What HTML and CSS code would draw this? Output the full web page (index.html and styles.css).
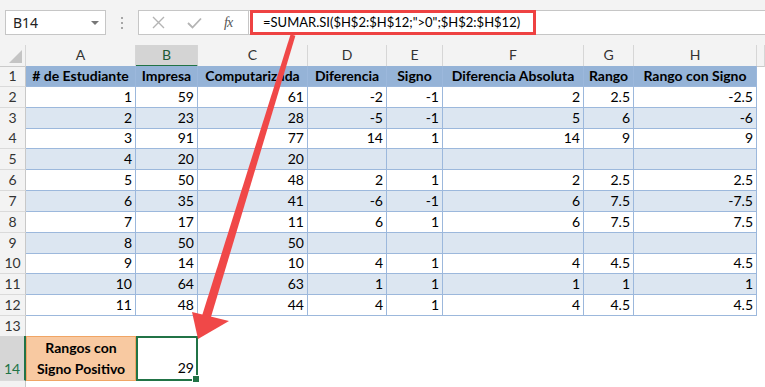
FILE: index.html
```html
<!DOCTYPE html>
<html lang="es">
<head>
  <meta charset="UTF-8">
  <title>SUMAR.SI</title>
  <link rel="stylesheet" href="styles.css">
</head>
<body>
<div class="page">

  <div class="formula-bar">
    <div class="name-box"><span>B14</span><i class="caret"></i></div>
    <div class="grip"><i></i><i></i><i></i></div>
    <div class="fx-box">
      <svg width="13" height="13" viewBox="0 0 13 13"><path d="M1 1 L12 12 M12 1 L1 12" stroke="#b4b4b4" stroke-width="1.4" fill="none"/></svg>
      <svg width="15" height="12" viewBox="0 0 15 12"><path d="M1 6 L5.5 10.5 L14 1.5" stroke="#b4b4b4" stroke-width="1.8" fill="none"/></svg>
      <span class="fx">fx</span>
    </div>
    <div class="formula">
      <div class="callout">=SUMAR.SI($H$2:$H$12;"&gt;0";$H$2:$H$12)</div>
    </div>
  </div>

  <div class="sheet">
    <div class="row col-head">
      <div class="corner"><i></i></div><div>A</div><div class="sel">B</div><div>C</div><div>D</div><div>E</div><div>F</div><div>G</div><div>H</div><div></div>
    </div>

    <div class="row r thead">
      <div class="rh">1</div><div class="c">#&nbsp;de Estudiante</div><div class="c">Impresa</div><div class="c">Computarizada</div><div class="c">Diferencia</div><div class="c">Signo</div><div class="c">Diferencia Absoluta</div><div class="c">Rango</div><div class="c">Rango con Signo</div><div></div>
    </div>
    <div class="row r">
      <div class="rh">2</div><div class="c">1</div><div class="c">59</div><div class="c">61</div><div class="c">-2</div><div class="c">-1</div><div class="c">2</div><div class="c">2.5</div><div class="c">-2.5</div><div></div>
    </div>
    <div class="row r stripe">
      <div class="rh">3</div><div class="c">2</div><div class="c">23</div><div class="c">28</div><div class="c">-5</div><div class="c">-1</div><div class="c">5</div><div class="c">6</div><div class="c">-6</div><div></div>
    </div>
    <div class="row r">
      <div class="rh">4</div><div class="c">3</div><div class="c">91</div><div class="c">77</div><div class="c">14</div><div class="c">1</div><div class="c">14</div><div class="c">9</div><div class="c">9</div><div></div>
    </div>
    <div class="row r stripe">
      <div class="rh">5</div><div class="c">4</div><div class="c">20</div><div class="c">20</div><div class="c"></div><div class="c"></div><div class="c"></div><div class="c"></div><div class="c"></div><div></div>
    </div>
    <div class="row r">
      <div class="rh">6</div><div class="c">5</div><div class="c">50</div><div class="c">48</div><div class="c">2</div><div class="c">1</div><div class="c">2</div><div class="c">2.5</div><div class="c">2.5</div><div></div>
    </div>
    <div class="row r stripe">
      <div class="rh">7</div><div class="c">6</div><div class="c">35</div><div class="c">41</div><div class="c">-6</div><div class="c">-1</div><div class="c">6</div><div class="c">7.5</div><div class="c">-7.5</div><div></div>
    </div>
    <div class="row r">
      <div class="rh">8</div><div class="c">7</div><div class="c">17</div><div class="c">11</div><div class="c">6</div><div class="c">1</div><div class="c">6</div><div class="c">7.5</div><div class="c">7.5</div><div></div>
    </div>
    <div class="row r stripe">
      <div class="rh">9</div><div class="c">8</div><div class="c">50</div><div class="c">50</div><div class="c"></div><div class="c"></div><div class="c"></div><div class="c"></div><div class="c"></div><div></div>
    </div>
    <div class="row r">
      <div class="rh">10</div><div class="c">9</div><div class="c">14</div><div class="c">10</div><div class="c">4</div><div class="c">1</div><div class="c">4</div><div class="c">4.5</div><div class="c">4.5</div><div></div>
    </div>
    <div class="row r stripe">
      <div class="rh">11</div><div class="c">10</div><div class="c">64</div><div class="c">63</div><div class="c">1</div><div class="c">1</div><div class="c">1</div><div class="c">1</div><div class="c">1</div><div></div>
    </div>
    <div class="row r">
      <div class="rh">12</div><div class="c">11</div><div class="c">48</div><div class="c">44</div><div class="c">4</div><div class="c">1</div><div class="c">4</div><div class="c">4.5</div><div class="c">4.5</div><div></div>
    </div>

    <div class="row r13">
      <div class="rh">13</div>
    </div>
    <div class="row r14">
      <div class="rh active-rh">14</div>
      <div class="label">Rangos con<br>Signo Positivo</div>
      <div class="active">29</div>
    </div>
    <div class="row r15">
      <div class="rh"></div>
    </div>
  </div>

  <svg class="arrow" width="765" height="387" viewBox="0 0 765 387">
    <polygon points="290.6,34.3 295.4,35.7 210.3,319.3 201.7,316.7" fill="#f04848"/>
    <polygon points="198,339 192,312 229,321" fill="#f04848"/>
  </svg>
</div>
</body>
</html>
```

FILE: styles.css
```css
* {
  box-sizing: border-box;
}
body {
  margin: 0;
  background: #fff;
  font-family: Lato, "Liberation Sans", sans-serif;
  color: #000;
}
.page {
  position: relative;
  width: 765px;
  height: 387px;
  overflow: hidden;
}

/* formula bar */
.formula-bar {
  display: flex;
  height: 45px;
  padding: 10px 0 0 5px;
  background: #f3f3f3;
}
.name-box {
  width: 101px;
  height: 25px;
  display: flex;
  align-items: center;
  justify-content: space-between;
  padding: 0 6px 0 7px;
  background: #fff;
  border: 1px solid #c6c6c6;
  font: 14px "Noto Sans", sans-serif;
  color: #222;
}
.caret {
  border-left: 4px solid transparent;
  border-right: 4px solid transparent;
  border-top: 4px solid #777;
}
.grip {
  width: 32px;
  height: 25px;
  display: flex;
  flex-direction: column;
  align-items: center;
  justify-content: center;
  gap: 3px;
}
.grip i {
  width: 2px;
  height: 2px;
  background: #a6a6a6;
}
.fx-box {
  width: 110px;
  height: 25px;
  display: flex;
  align-items: center;
  gap: 22px;
  padding-left: 13px;
  background: #fff;
  border: 1px solid #c6c6c6;
  border-right: none;
}
.fx {
  font: italic 14px "Liberation Serif", serif;
  color: #555;
  letter-spacing: -1px;
}
.formula {
  flex: 1;
  height: 25px;
  background: #fff;
  border: 1px solid #c6c6c6;
  border-right: none;
}
.callout {
  width: 286px;
  height: 25px;
  margin: -1px 0 0 1px;
  padding-left: 10px;
  border: 3px solid #ee4242;
  font-size: 13px;
  line-height: 19px;
  white-space: nowrap;
}

/* sheet */
.sheet {
  --cols: 26px 110px 62px 110px 79px 56px 141px 50px 123px 1fr;
  font-size: 14px;
}
.row {
  display: grid;
  grid-template-columns: var(--cols);
}
.col-head {
  height: 21px;
  background: #f3f3f3;
  color: #333;
}
.col-head > div {
  text-align: center;
  line-height: 20px;
  border-right: 1px solid #d6d6d6;
  border-bottom: 1px solid #cacaca;
}
.col-head .sel {
  background: #d4d4d4;
  color: #1d5a36;
  border-bottom: 2px solid #217346;
}
.corner {
  position: relative;
}
.corner i {
  position: absolute;
  right: 3px;
  bottom: 3px;
  width: 13px;
  height: 13px;
  background: #c4c4c4;
  clip-path: polygon(100% 0, 100% 100%, 0 100%);
}

.rh {
  background: #f3f3f3;
  color: #333;
  text-align: center;
  line-height: 20px;
  border-right: 1px solid #c8c8c8;
  border-bottom: 1px solid #dadada;
}
.r {
  height: 20.833px;
}
.c {
  text-align: right;
  padding-right: 3px;
  line-height: 20px;
  white-space: nowrap;
  overflow: hidden;
  border-right: 1px solid #9cb8dc;
  border-bottom: 1px solid #9cb8dc;
}
.stripe .c {
  background: #dce6f1;
}
.thead .c {
  background: #95b3d7;
  font-weight: 700;
  text-align: center;
  padding: 0;
}

.r13 {
  height: 20px;
}
.r14 {
  height: 45px;
}
.r15 {
  height: 10px;
}
.r14 .rh {
  display: flex;
  align-items: flex-end;
  justify-content: center;
  padding-bottom: 1px;
}
.active-rh {
  background: #d6d6d6;
  color: #217346;
  border-right: 2px solid #217346;
}
.label {
  display: flex;
  flex-direction: column;
  justify-content: flex-end;
  padding-bottom: 1px;
  background: #f8c9a1;
  border: 1px solid #f0a565;
  font-weight: 700;
  text-align: center;
  line-height: 21px;
}
.active {
  position: relative;
  display: flex;
  align-items: flex-end;
  justify-content: flex-end;
  padding: 0 2px 1px 0;
  border: 2px solid #217346;
  line-height: 20px;
}
.active::after {
  content: "";
  position: absolute;
  right: -4px;
  bottom: -4px;
  width: 6px;
  height: 6px;
  background: #217346;
  border: 1px solid #fff;
}

.arrow {
  position: absolute;
  top: 0;
  left: 0;
  pointer-events: none;
}
```
